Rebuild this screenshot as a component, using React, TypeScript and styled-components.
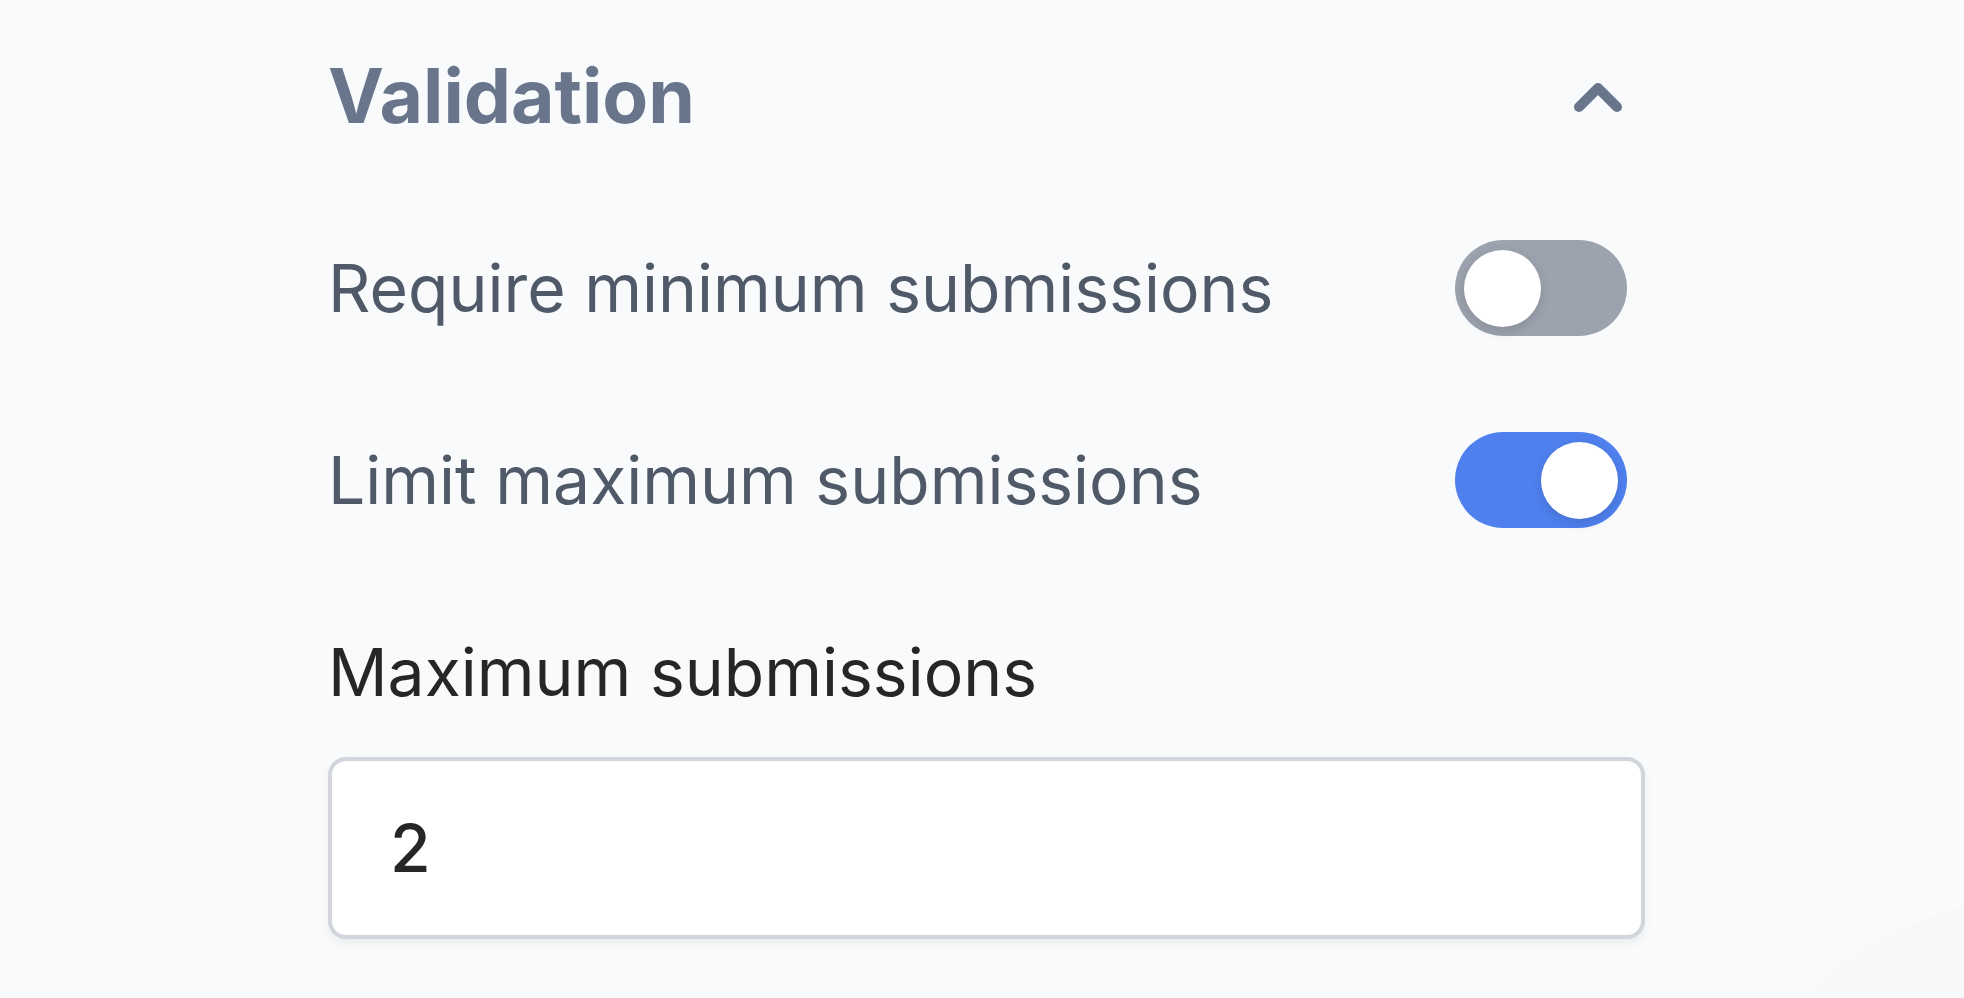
import React, { useState } from "react";
import styled, { createGlobalStyle } from "styled-components";

const GlobalStyle = createGlobalStyle`
  *, *::before, *::after { box-sizing: border-box; }
  body {
    margin: 0;
    min-height: 100vh;
    background: radial-gradient(ellipse 400px 222px at 110% 110%, #f7f8fa 99%, transparent 100%) #f9fafc;
    font-family: Inter, "Liberation Sans", sans-serif;
  }
`;

const Panel = styled.section`
  margin: 0 319px 0 328px;
  padding: 48px 0;
`;

const Header = styled.header`
  display: flex;
  align-items: center;
  justify-content: space-between;
  height: 96px;
  padding-right: 22px;
`;

const Title = styled.h2`
  margin: 0;
  font-size: 75px;
  line-height: 96px;
  font-weight: 700;
  color: #68758b;
`;

const CollapseButton = styled.button`
  display: flex;
  padding: 0;
  border: 0;
  background: none;
  color: #68758b;
  cursor: pointer;
`;

const Row = styled.label`
  display: flex;
  align-items: center;
  justify-content: space-between;
  height: 96px;
  margin-top: 96px;
  padding-right: 18px;
  font-size: 66px;
  color: #4f5968;
`;

const Switch = styled.input<{ $on: boolean }>`
  appearance: none;
  flex: none;
  display: flex;
  align-items: center;
  justify-content: ${(p) => (p.$on ? "flex-end" : "flex-start")};
  width: 172px;
  height: 96px;
  margin: 0;
  padding: 0 9px;
  border-radius: 48px;
  background: ${(p) => (p.$on ? "#4f80ee" : "#9ca2ae")};
  cursor: pointer;
  &::before {
    content: "";
    width: 77px;
    height: 77px;
    border-radius: 50%;
    background: #fff;
    box-shadow: 0 4px 12px rgba(0, 0, 0, 0.12);
  }
`;

const FieldLabel = styled.label`
  display: block;
  margin-top: 96px;
  font-size: 66px;
  line-height: 96px;
  color: #262626;
`;

const Field = styled.input`
  display: block;
  width: 100%;
  height: 182px;
  margin-top: 37px;
  padding: 0 58px;
  border: 4px solid #d2d5db;
  border-radius: 18px;
  background: #fff;
  box-shadow: 0 5px 10px rgba(0, 0, 0, 0.05);
  font: 500 66px Inter, "Liberation Sans", sans-serif;
  color: #262626;
  outline: none;
`;

export default function App() {
  const [open, setOpen] = useState(true);
  const [min, setMin] = useState(false);
  const [max, setMax] = useState(true);
  const [count, setCount] = useState("2");
  return (
    <>
      <GlobalStyle />
      <Panel>
        <Header>
          <Title>Validation</Title>
          <CollapseButton aria-label="Toggle validation" aria-expanded={open} onClick={() => setOpen(!open)}>
            <svg width="50" height="32" viewBox="0 0 50 32" fill="none" stroke="currentColor" strokeWidth="10" strokeLinecap="round" strokeLinejoin="round">
              <path d="M6 27 25 8 44 27" />
            </svg>
          </CollapseButton>
        </Header>
        {open && (
          <>
            <Row>
              Require minimum submissions
              <Switch type="checkbox" role="switch" $on={min} checked={min} onChange={() => setMin(!min)} />
            </Row>
            <Row>
              Limit maximum submissions
              <Switch type="checkbox" role="switch" $on={max} checked={max} onChange={() => setMax(!max)} />
            </Row>
            {max && (
              <>
                <FieldLabel htmlFor="max-submissions">Maximum submissions</FieldLabel>
                <Field id="max-submissions" inputMode="numeric" value={count} onChange={(e) => setCount(e.target.value)} />
              </>
            )}
          </>
        )}
      </Panel>
    </>
  );
}
